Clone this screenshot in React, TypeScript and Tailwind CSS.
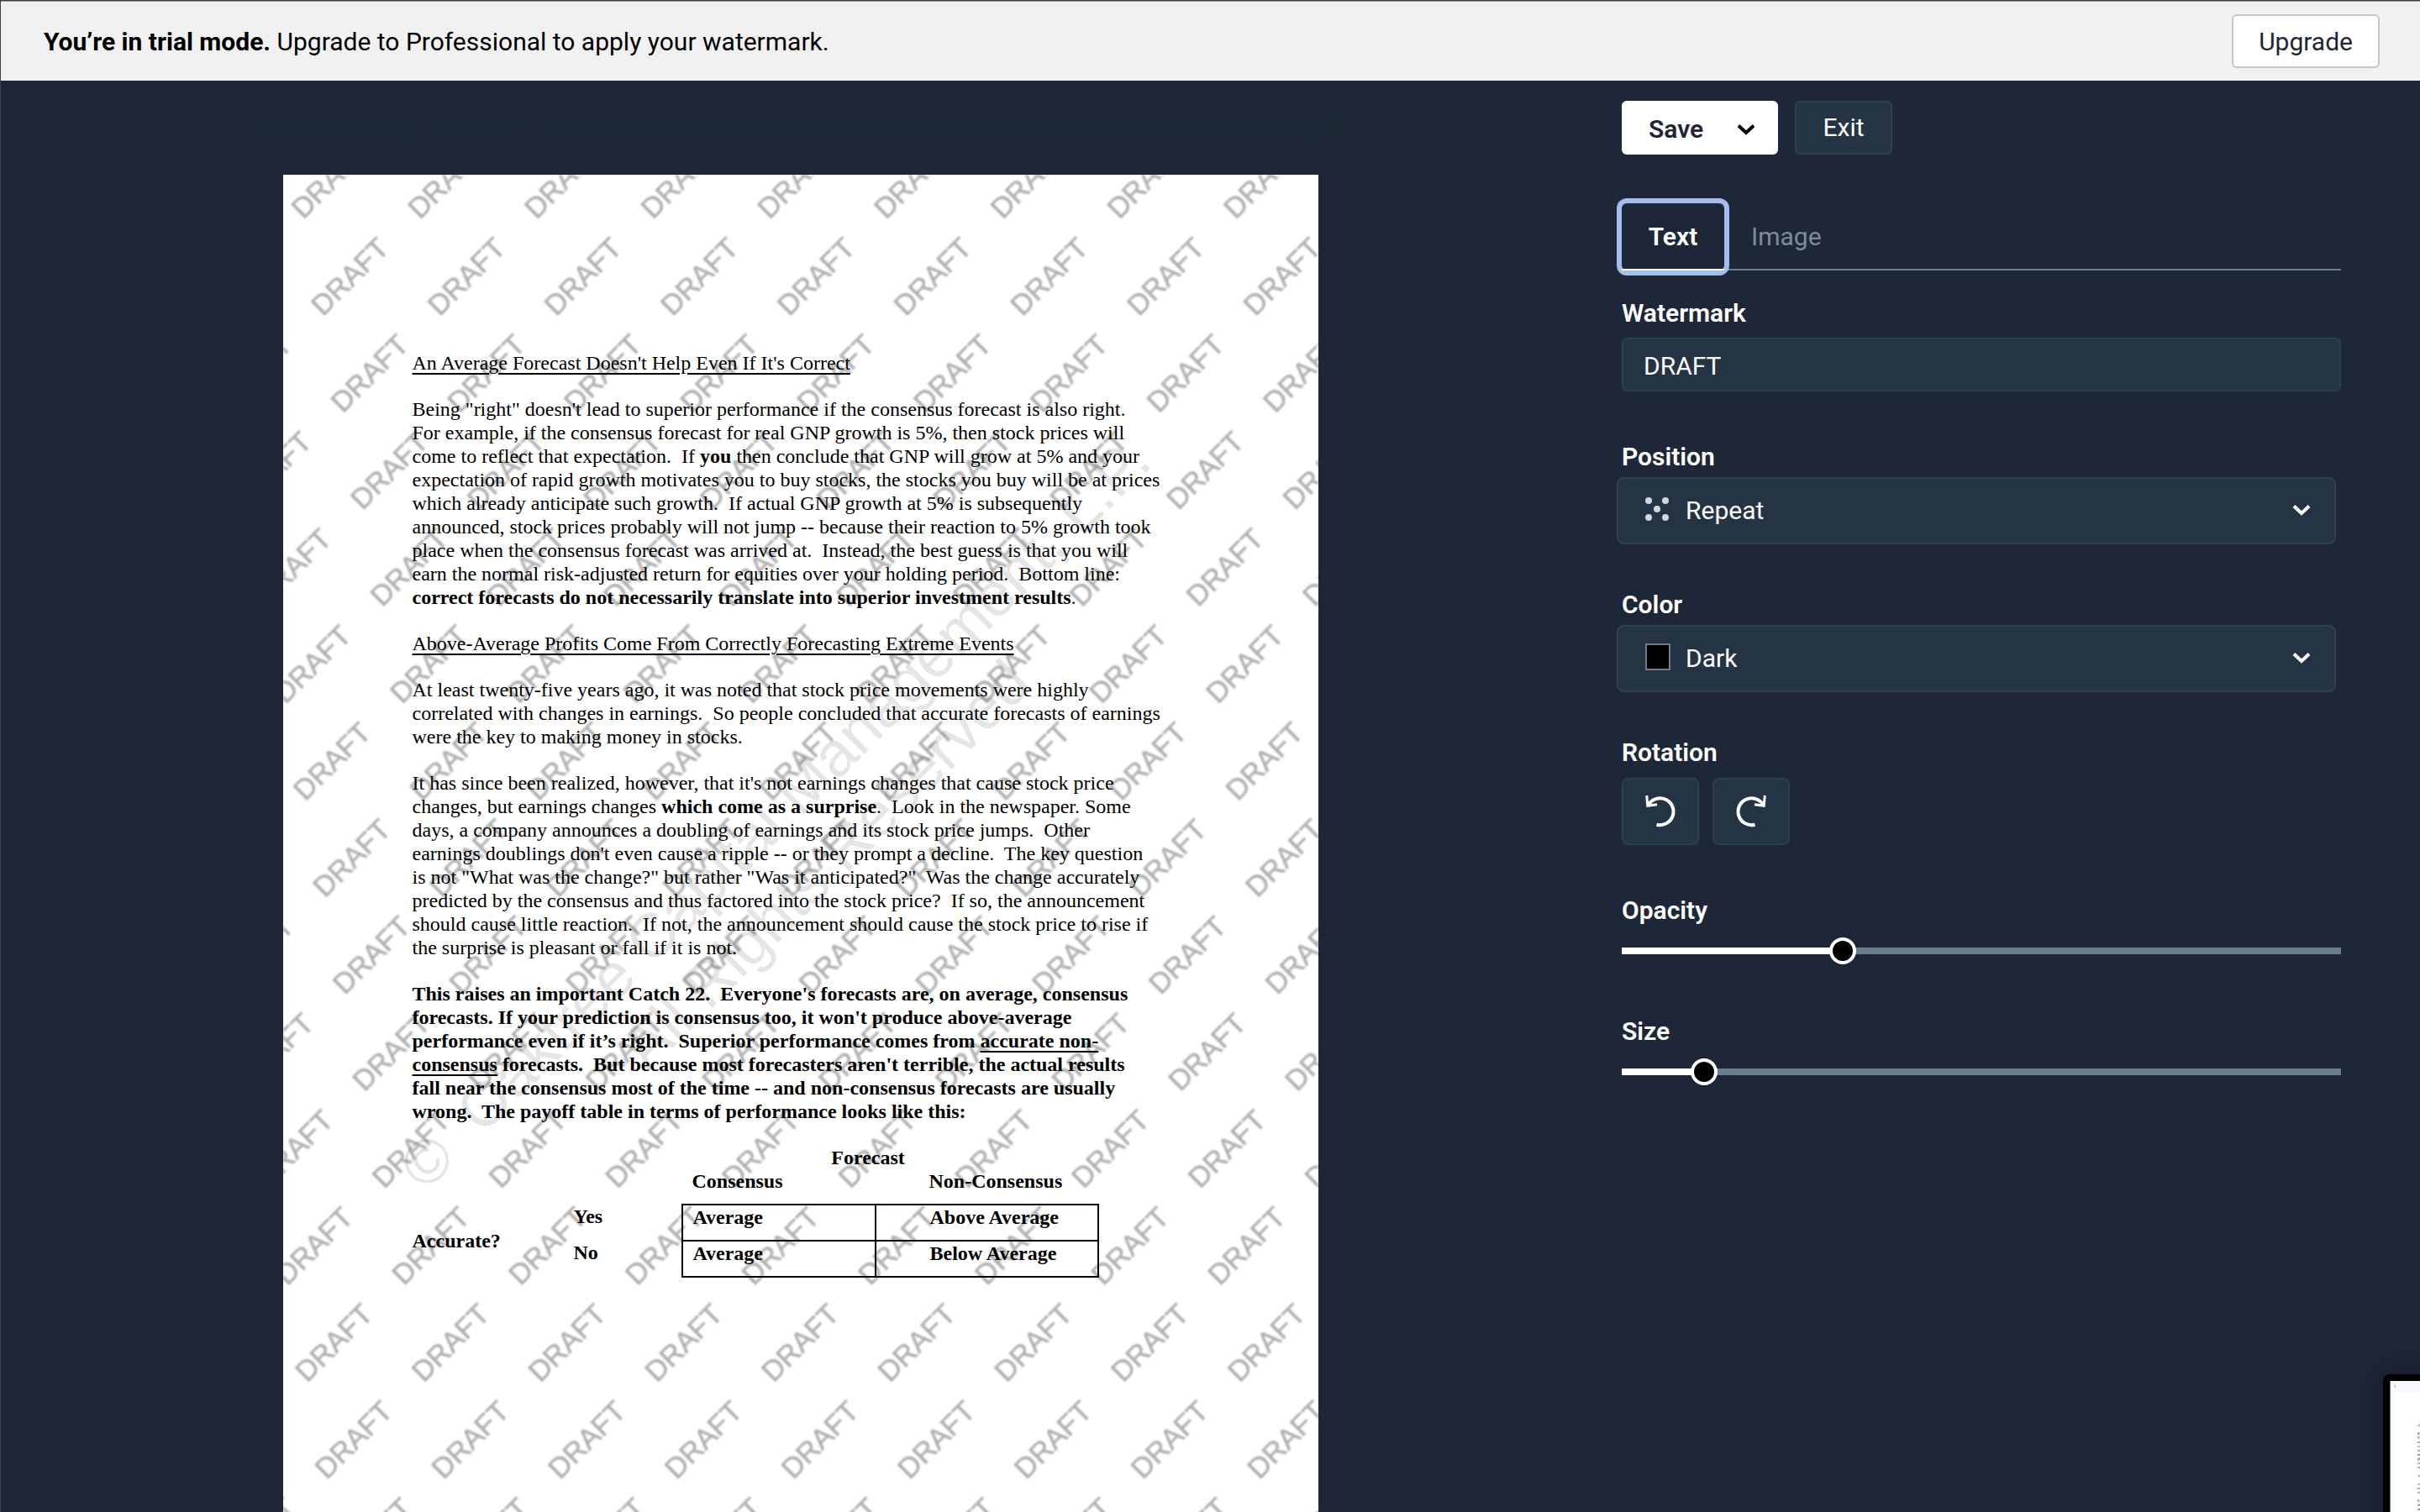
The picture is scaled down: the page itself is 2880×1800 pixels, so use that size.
import { useState } from "react";
import type { ReactNode } from "react";

const PAGE_WIDTH = 1232;
const PAGE_HEIGHT = 1594;

function Chevron({ className }: { className: string }) {
  return (
    <svg viewBox="0 0 22 14" fill="none" stroke="currentColor" strokeWidth="4" className={className} aria-hidden="true">
      <path d="M2 2.500 L11 11 L20 2.500" />
    </svg>
  );
}

function TrialBanner() {
  return (
    <header className="flex h-[95px] shrink-0 items-center justify-between border-t border-[#979394] bg-[#f1f1f1] pl-[51px] pr-12 text-black">
      <p className="pt-0.5 text-[30px] leading-10">
        <strong className="font-bold">You’re in trial mode.</strong> Upgrade to Professional to apply your watermark.
      </p>
      <button type="button" className="h-16 rounded-md border-2 border-[#c3c7ca] bg-white px-[30px] pt-0.5 text-[30px] leading-10 text-[#1e2738]">
        Upgrade
      </button>
    </header>
  );
}

function RepeatedMark({ text }: { text: string }) {
  const marks: { x: number; y: number }[] = [];
  for (let row = 0; row < 15; row++) {
    for (let col = -4; col < 10; col++) {
      const x = 24 + row * 23.5 + col * 138.7;
      if (x > -90 && x < PAGE_WIDTH + 20) marks.push({ x, y: 54 + row * 115.4 });
    }
  }
  return (
    <svg viewBox={`0 0 ${PAGE_WIDTH} ${PAGE_HEIGHT}`} className="pointer-events-none absolute inset-0 size-full blur-[1px]" aria-hidden="true">
      <g fill="#000" stroke="#000" strokeWidth="0.6" opacity="0.32" fontSize="34" fontFamily="'Liberation Sans', Arial, sans-serif">
        {marks.map(({ x, y }) => (
          <text key={`${x}-${y}`} transform={`translate(${x} ${y}) rotate(-45)`}>
            {text}
          </text>
        ))}
      </g>
    </svg>
  );
}

function Copyright() {
  return (
    <div className="pointer-events-none absolute inset-0 flex items-center justify-center pb-3" aria-hidden="true">
      <p className="-rotate-45 whitespace-pre text-center font-['Liberation_Sans',Arial,sans-serif] text-[74px] leading-[86px] text-[#e5e5e5]">
        {"©  Oaktree Capital Management, L.P."}
        <br />
        All Rights Reserved
      </p>
    </div>
  );
}

function PayoffTable() {
  return (
    <table className="w-[816px] table-fixed border-collapse text-left font-bold">
      <colgroup>
        <col className="w-[192px]" />
        <col className="w-[129px]" />
        <col className="w-[230px]" />
        <col className="w-[265px]" />
      </colgroup>
      <thead>
        <tr>
          <td colSpan={2} />
          <th colSpan={2} className="pr-[52px] text-center">Forecast</th>
        </tr>
        <tr className="h-[42px] align-top">
          <td colSpan={2} />
          <th className="pl-3">Consensus</th>
          <th className="pl-16">Non-Consensus</th>
        </tr>
      </thead>
      <tbody>
        <tr className="h-[43px] align-top">
          <th rowSpan={2} className="pt-[29px]">Accurate?</th>
          <th>Yes</th>
          <td className="border-2 border-black pl-3">Average</td>
          <td className="border-2 border-black pl-16">Above Average</td>
        </tr>
        <tr className="h-[43px] align-top">
          <th>No</th>
          <td className="border-2 border-black pl-3">Average</td>
          <td className="border-2 border-black pl-16">Below Average</td>
        </tr>
      </tbody>
    </table>
  );
}

function DocumentPage({ watermark }: { watermark: string }) {
  return (
    <article className="relative mx-auto aspect-[1232/1594] w-full max-w-[1232px] shrink-0 overflow-hidden bg-white font-['Liberation_Serif','Times_New_Roman',serif] text-2xl leading-7 text-black">
      <Copyright />
      <div className="relative flex flex-col gap-[27px] whitespace-pre pl-[154px] pt-[210px] text-[24px] leading-7">
        <h2 className="underline decoration-2 underline-offset-4">An Average Forecast Doesn't Help Even If It's Correct</h2>
        <p>
          Being "right" doesn't lead to superior performance if the consensus forecast is also right.<br />
          For example, if the consensus forecast for real GNP growth is 5%, then stock prices will<br />
          {"come to reflect that expectation.  If "}<b>you</b> then conclude that GNP will grow at 5% and your<br />
          expectation of rapid growth motivates you to buy stocks, the stocks you buy will be at prices<br />
          {"which already anticipate such growth.  If actual GNP growth at 5% is subsequently"}<br />
          announced, stock prices probably will not jump -- because their reaction to 5% growth took<br />
          {"place when the consensus forecast was arrived at.  Instead, the best guess is that you will"}<br />
          {"earn the normal risk-adjusted return for equities over your holding period.  Bottom line:"}<br />
          <b>correct forecasts do not necessarily translate into superior investment results</b>.
        </p>
        <h2 className="underline decoration-2 underline-offset-4">Above-Average Profits Come From Correctly Forecasting Extreme Events</h2>
        <p>
          At least twenty-five years ago, it was noted that stock price movements were highly<br />
          {"correlated with changes in earnings.  So people concluded that accurate forecasts of earnings"}<br />
          were the key to making money in stocks.
        </p>
        <p>
          It has since been realized, however, that it's not earnings changes that cause stock price<br />
          changes, but earnings changes <b>which come as a surprise</b>{".  Look in the newspaper. Some"}<br />
          {"days, a company announces a doubling of earnings and its stock price jumps.  Other"}<br />
          {"earnings doublings don't even cause a ripple -- or they prompt a decline.  The key question"}<br />
          {"is not \"What was the change?\" but rather \"Was it anticipated?\"  Was the change accurately"}<br />
          {"predicted by the consensus and thus factored into the stock price?  If so, the announcement"}<br />
          {"should cause little reaction.  If not, the announcement should cause the stock price to rise if"}<br />
          the surprise is pleasant or fall if it is not.
        </p>
        <p className="font-bold">
          {"This raises an important Catch 22.  Everyone's forecasts are, on average, consensus"}<br />
          forecasts. If your prediction is consensus too, it won't produce above-average<br />
          {"performance even if it’s right.  Superior performance comes from "}
          <u className="decoration-2 underline-offset-4">accurate non-<br />consensus</u>
          {" forecasts.  But because most forecasters aren't terrible, the actual results"}<br />
          fall near the consensus most of the time -- and non-consensus forecasts are usually<br />
          {"wrong.  The payoff table in terms of performance looks like this:"}
        </p>
        <PayoffTable />
      </div>
      <RepeatedMark text={watermark} />
    </article>
  );
}

function Label({ htmlFor, children }: { htmlFor: string; children: ReactNode }) {
  return (
    <label htmlFor={htmlFor} className="block h-10 text-[30px] font-semibold leading-[42px]">
      {children}
    </label>
  );
}

function SelectField({ id, label, icon, options }: { id: string; label: string; icon: ReactNode; options: string[] }) {
  return (
    <div>
      <Label htmlFor={id}>{label}</Label>
      <div className="relative -ml-1.5 mr-1.5 mt-[5px]">
        <select id={id} className="block h-20 w-full appearance-none rounded-lg border-2 border-[#2c4053] bg-[#253444] pl-20 pr-20 text-[30px]">
          {options.map((o) => (
            <option key={o}>{o}</option>
          ))}
        </select>
        <span className="pointer-events-none absolute inset-y-0 left-[34px] flex items-center">{icon}</span>
        <Chevron className="pointer-events-none absolute right-[30px] top-8 w-[22px]" />
      </div>
    </div>
  );
}

function RotateIcon({ className }: { className?: string }) {
  return (
    <svg viewBox="0 0 44 44" fill="none" stroke="currentColor" className={className} aria-hidden="true">
      <path d="M17.500 37.700 A16 16 0 1 0 7.500 14.500" strokeWidth="4" />
      <path d="M5.700 3 L6.800 15.300 L18 13.700" strokeWidth="3" />
    </svg>
  );
}

function SliderField({ id, label, initial }: { id: string; label: string; initial: number }) {
  const [value, setValue] = useState(initial);
  return (
    <div>
      <Label htmlFor={id}>{label}</Label>
      <input
        id={id}
        type="range"
        value={value}
        onChange={(e) => setValue(Number(e.target.value))}
        className="mt-[13px] block h-8 w-full appearance-none bg-transparent bg-[length:100%_8px] bg-center bg-no-repeat [&::-webkit-slider-thumb]:size-8 [&::-webkit-slider-thumb]:appearance-none [&::-webkit-slider-thumb]:rounded-full [&::-webkit-slider-thumb]:border-4 [&::-webkit-slider-thumb]:border-white [&::-webkit-slider-thumb]:bg-black"
        style={{ backgroundImage: `linear-gradient(to right, #fff ${value}%, #6b7c8f ${value}%)` }}
      />
    </div>
  );
}

function RepeatIcon() {
  return (
    <svg viewBox="0 0 28 28" fill="#d3d6db" className="mb-1 size-7" aria-hidden="true">
      <circle cx="4" cy="4" r="4" />
      <circle cx="24" cy="4" r="4" />
      <circle cx="14" cy="14" r="4" />
      <circle cx="4" cy="24" r="4" />
      <circle cx="24" cy="24" r="4" />
    </svg>
  );
}

function ControlPanel({ watermark, onWatermark }: { watermark: string; onWatermark: (v: string) => void }) {
  return (
    <aside className="pl-[26px] pr-[94px] pt-6 text-[30px] leading-10 text-white">
      <div className="flex gap-5">
        <div className="flex h-16 w-[186px] rounded-md bg-white">
          <button type="button" className="pl-8 pr-3 pt-1 font-semibold text-[#1e2738]">Save</button>
          <button type="button" aria-label="More save options" className="flex grow items-center justify-center pt-1 text-black">
            <Chevron className="w-[22px]" />
          </button>
        </div>
        <button type="button" className="h-16 w-[116px] rounded-md border-2 border-[#2c4053] bg-[#253444]">Exit</button>
      </div>

      <div role="tablist" className="mt-[58px] flex h-20 border-b-2 border-[#6b7c8f]">
        <button
          type="button"
          role="tab"
          aria-selected="true"
          className="relative h-20 w-[122px] rounded-md font-semibold ring-6 ring-[#a4bdec] after:absolute after:inset-x-0 after:bottom-0 after:h-0.5 after:bg-white"
        >
          Text
        </button>
        <button type="button" role="tab" aria-selected="false" className="h-20 px-8 text-[#7d8b9b]">
          Image
        </button>
      </div>

      <div className="mt-[30px]">
        <Label htmlFor="watermark">Watermark</Label>
        <input
          id="watermark"
          type="text"
          value={watermark}
          onChange={(e) => onWatermark(e.target.value)}
          className="mt-2.5 block h-16 w-full rounded-md border-2 border-[#2c4053] bg-[#253444] px-6 pt-0.5 text-[30px]"
        />
      </div>

      <div className="mt-[57px] flex flex-col gap-[51px]">
        <SelectField id="position" label="Position" icon={<RepeatIcon />} options={["Repeat", "Center", "Top", "Bottom"]} />
        <SelectField
          id="color"
          label="Color"
          icon={<span className="mb-1 h-8 w-[30px] border-2 border-[#747a82] bg-black" />}
          options={["Dark", "Light"]}
        />
        <div role="group" aria-labelledby="rotation">
          <h3 id="rotation" className="h-10 font-semibold leading-[42px]">Rotation</h3>
          <div className="mt-[11px] flex gap-4">
            <button type="button" aria-label="Rotate counterclockwise" className="flex h-20 w-[92px] items-center justify-center rounded-lg border-2 border-[#2c4053] bg-[#253444]">
              <RotateIcon className="size-11" />
            </button>
            <button type="button" aria-label="Rotate clockwise" className="flex h-20 w-[92px] items-center justify-center rounded-lg border-2 border-[#2c4053] bg-[#253444]">
              <RotateIcon className="size-11 -scale-x-100" />
            </button>
          </div>
        </div>
      </div>

      <div className="mt-[57px] flex flex-col gap-[59px]">
        <SliderField id="opacity" label="Opacity" initial={30} />
        <SliderField id="size" label="Size" initial={10} />
      </div>
    </aside>
  );
}

function MiniWindow() {
  return (
    <div className="absolute -right-[600px] top-[1635px] h-[900px] w-[644px] rounded-lg border-8 border-black bg-black shadow-[0_0_40px_rgba(0,0,0,0.35)]" aria-hidden="true">
      <div className="h-full border-l border-[#777] bg-[#f6f8fb] pl-1">
        <div className="flex h-3.5 items-center text-[7px] leading-none text-[#555]">‹</div>
        <div className="h-full whitespace-pre bg-white pl-7 pt-9 font-['Liberation_Serif',serif] text-[4px] leading-[5px] text-black">
          {"An Average Forecast\n\nBeing right\nFor example\ncome to reflect\nexpectation\nwhich already\nannounced\nplace when\nearn the\ncorrect\n\nAbove-Average\n\nAt least\ncorrelated\nwere the key\n\nIt has since\nchanges\ndays"}
        </div>
      </div>
    </div>
  );
}

export default function App() {
  const [watermark, setWatermark] = useState("DRAFT");
  return (
    <div className="relative flex h-screen flex-col overflow-hidden border-l border-t border-[#3f3e40] bg-[#1e2738] font-[Roboto,sans-serif]">
      <TrialBanner />
      <main className="grid min-h-0 flex-1 grid-cols-[minmax(0,1fr)_minmax(0,976px)]">
        <section className="flex min-h-0 flex-col overflow-hidden">
          <h1 className="flex h-28 shrink-0 items-center justify-center whitespace-pre text-[30px] leading-10 text-[#1c2a36]">
            Watermarking: <b className="font-bold">1993-02-15-the-value-of-predictions-or-where-39-d-all-this-rain-come-from.pdf</b>
          </h1>
          <DocumentPage watermark={watermark} />
        </section>
        <ControlPanel watermark={watermark} onWatermark={setWatermark} />
      </main>
      <MiniWindow />
    </div>
  );
}
